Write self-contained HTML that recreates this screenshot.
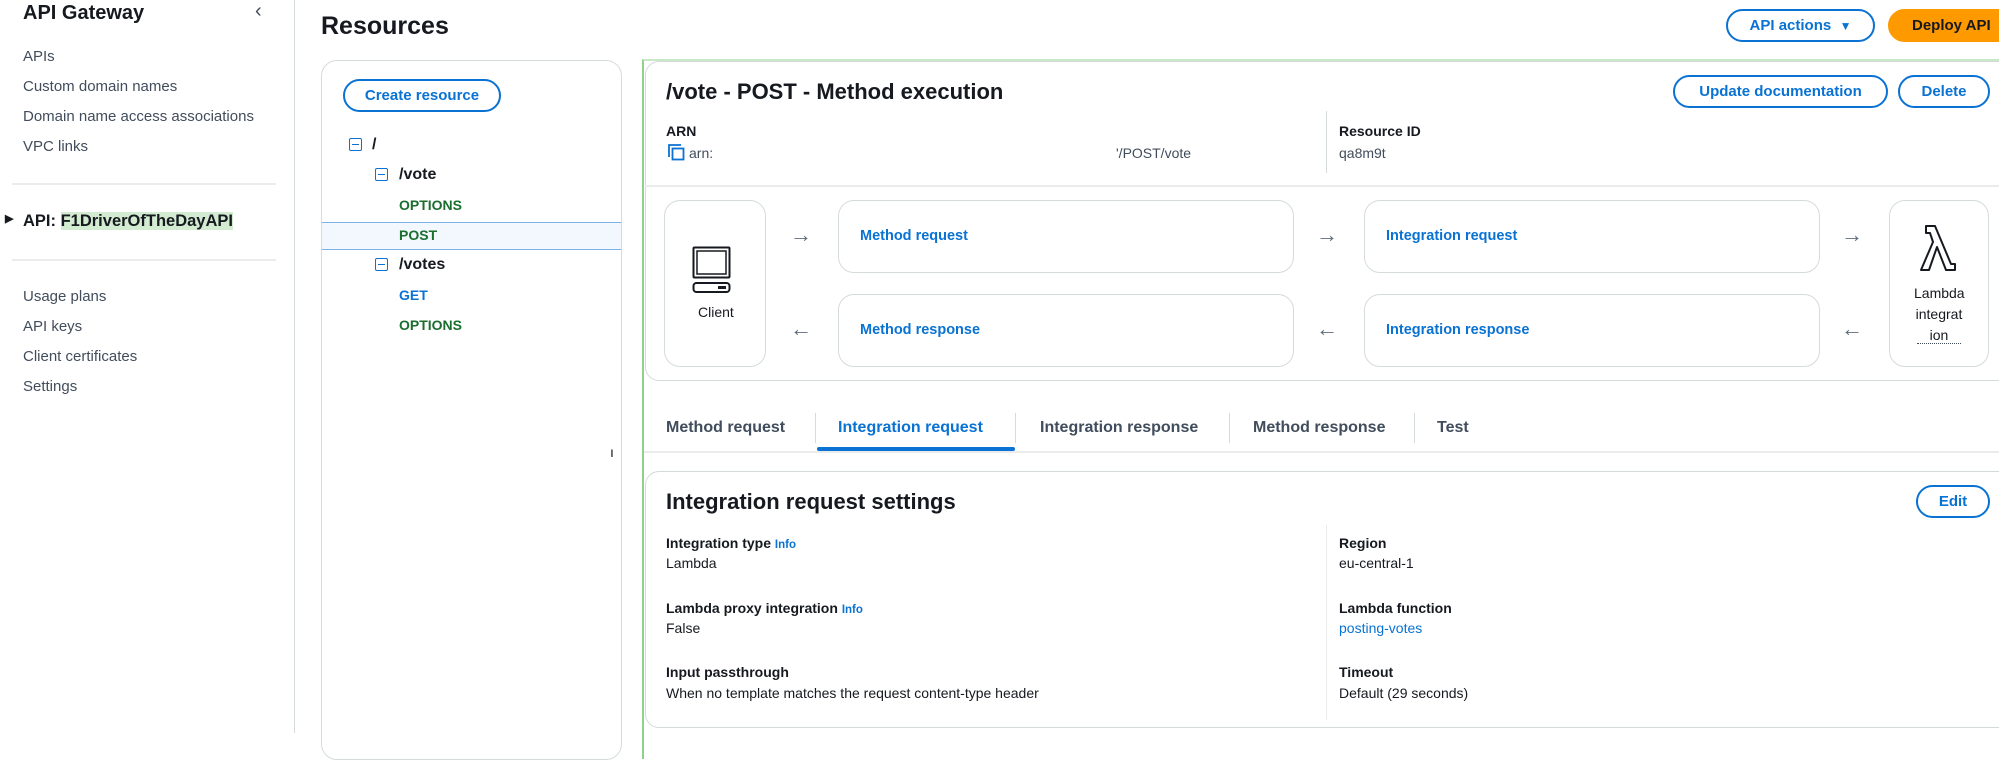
<!DOCTYPE html>
<html><head><meta charset="utf-8"><style>
*{margin:0;padding:0;box-sizing:border-box}
body{width:1999px;height:733px;overflow:hidden;background:#fff;font-family:"Liberation Sans",sans-serif;color:#16191f;position:relative}
.a{position:absolute;white-space:nowrap;line-height:1}
.nav{font-size:15px;color:#414d5c;left:23px}
.b{font-weight:bold}
.blue{color:#0972d3 !important}
.green{color:#1a6e2e}
.btn{position:absolute;border:2px solid #0972d3;border-radius:20px;color:#0972d3;font-weight:bold;font-size:15px;display:flex;align-items:center;justify-content:center;background:#fff}
.box{position:absolute;border:1.5px solid #d5dbdb;border-radius:16px;background:#fff}
.arrow{position:absolute;font-size:22px;color:#5f6b7a;line-height:1}
.lab{font-size:14px;font-weight:bold}
.val{font-size:14px;color:#16191f}
.tree-ic{position:absolute;width:13px;height:13px;border:1.8px solid #0972d3;border-radius:2px}
.tree-ic:after{content:"";position:absolute;left:2px;right:2px;top:4.5px;height:1.8px;background:#0972d3}
</style></head><body>
<!-- sidebar -->
<div style="position:absolute;left:294px;top:0;width:1px;height:733px;background:#d5dbdb"></div>
<div class="a b" style="left:23px;top:3px;font-size:20px">API Gateway</div>
<div class="a" style="left:255px;top:1px;font-size:20px;color:#414d5c">‹</div>
<div class="a nav" style="top:49px">APIs</div>
<div class="a nav" style="top:79px">Custom domain names</div>
<div class="a nav" style="top:109px">Domain name access associations</div>
<div class="a nav" style="top:139px">VPC links</div>
<div style="position:absolute;left:12px;width:264px;top:183px;height:2px;background:#e9ebed"></div>
<div class="a b" style="left:5px;top:214px;font-size:11px">▶</div>
<div class="a b" style="left:23px;top:213px;font-size:16.5px">API: <span style="background:#d3ecd1">F1DriverOfTheDayAPI</span></div>
<div style="position:absolute;left:12px;width:264px;top:259px;height:2px;background:#e9ebed"></div>
<div class="a nav" style="top:289px">Usage plans</div>
<div class="a nav" style="top:319px">API keys</div>
<div class="a nav" style="top:349px">Client certificates</div>
<div class="a nav" style="top:379px">Settings</div>

<div class="a b" style="left:321px;top:14px;font-size:25px">Resources</div>
<div class="btn" style="left:1726px;top:9px;width:149px;height:33px">API actions&nbsp;&nbsp;<span style="font-size:12px">▼</span></div>
<div class="btn" style="left:1888px;top:9px;width:130px;height:33px;background:#ff9900;border-color:#ff9900;color:#16191f;justify-content:flex-start;padding-left:22px">Deploy API</div>

<!-- tree panel -->
<div class="box" style="left:321px;top:60px;width:301px;height:700px"></div>
<div class="btn" style="left:343px;top:79px;width:158px;height:33px">Create resource</div>
<div class="tree-ic" style="left:349px;top:138px"></div><div class="a b" style="left:372px;top:137px;font-size:16px">/</div>
<div class="tree-ic" style="left:375px;top:168px"></div><div class="a b" style="left:399px;top:167px;font-size:16px">/vote</div>
<div class="a b green" style="left:399px;top:198px;font-size:14px">OPTIONS</div>
<div style="position:absolute;left:322px;top:222px;width:299px;height:28px;background:#f2f8fd;border-top:1.5px solid #7db3e8;border-bottom:1.5px solid #7db3e8"></div>
<div class="a b green" style="left:399px;top:228px;font-size:14px">POST</div>
<div class="tree-ic" style="left:375px;top:258px"></div><div class="a b" style="left:399px;top:257px;font-size:16px">/votes</div>
<div class="a b blue" style="left:399px;top:288px;font-size:14px">GET</div>
<div class="a b green" style="left:399px;top:318px;font-size:14px">OPTIONS</div>
<div class="a" style="left:610px;top:445px;font-size:14px">ı</div>

<!-- main -->
<div style="position:absolute;left:642px;top:59px;width:1400px;height:700px;border-left:2px solid #8fd18a;border-top:2px solid #c9e8c6"></div>
<div class="box" style="left:645px;top:61px;width:1400px;height:320px;border-radius:14px"></div>
<div class="a b" style="left:666px;top:81px;font-size:22px">/vote - POST - Method execution</div>
<div class="btn" style="left:1673px;top:75px;width:215px;height:33px">Update documentation</div>
<div class="btn" style="left:1898px;top:75px;width:92px;height:33px">Delete</div>
<div class="a lab" style="left:666px;top:124px">ARN</div>
<svg style="position:absolute;left:668px;top:144px" width="17" height="17" viewBox="0 0 17 17"><path d="M1 13V1h12" fill="none" stroke="#0972d3" stroke-width="1.8"/><rect x="4.5" y="4.5" width="11" height="11" fill="none" stroke="#0972d3" stroke-width="1.8"/></svg>
<div class="a val" style="left:689px;top:146px;color:#414d5c">arn:</div>
<div class="a val" style="left:1116px;top:146px;color:#414d5c">'/POST/vote</div>
<div style="position:absolute;left:1326px;top:111px;width:1px;height:62px;background:#d5dbdb"></div>
<div class="a lab" style="left:1339px;top:124px">Resource ID</div>
<div class="a val" style="left:1339px;top:146px;color:#414d5c">qa8m9t</div>
<div style="position:absolute;left:645px;top:185px;width:1360px;height:1.5px;background:#e9ebed"></div>

<div class="box" style="left:664px;top:200px;width:102px;height:167px"></div>
<svg style="position:absolute;left:692px;top:246px" width="40" height="48" viewBox="0 0 40 48"><rect x="1.5" y="1.5" width="36" height="30" rx="1" fill="none" stroke="#16191f" stroke-width="2"/><rect x="5" y="5" width="29" height="23" fill="none" stroke="#16191f" stroke-width="1.5"/><rect x="1.5" y="37" width="36" height="9" rx="3" fill="none" stroke="#16191f" stroke-width="2"/><rect x="26" y="40" width="8" height="3" fill="#16191f"/></svg>
<div class="a" style="left:698px;top:305px;font-size:14px;color:#16191f">Client</div>

<div class="box" style="left:838px;top:200px;width:456px;height:73px"></div>
<div class="a b blue" style="left:860px;top:229px;font-size:14.5px">Method request</div>
<div class="box" style="left:838px;top:294px;width:456px;height:73px"></div>
<div class="a b blue" style="left:860px;top:323px;font-size:14.5px">Method response</div>
<div class="box" style="left:1364px;top:200px;width:456px;height:73px"></div>
<div class="a b blue" style="left:1386px;top:229px;font-size:14.5px">Integration request</div>
<div class="box" style="left:1364px;top:294px;width:456px;height:73px"></div>
<div class="a b blue" style="left:1386px;top:323px;font-size:14.5px">Integration response</div>
<div class="box" style="left:1889px;top:200px;width:100px;height:167px"></div>
<svg style="position:absolute;left:1920px;top:224px" width="36" height="48" viewBox="0 0 36 48"><path d="M6 2h9l16 38h4v6h-9L17 23 9 46H1l12-28-3-9H6z" fill="none" stroke="#16191f" stroke-width="2" stroke-linejoin="round"/></svg>
<div class="a" style="left:1914px;top:283px;font-size:14px;line-height:21px;text-align:center;width:50px">Lambda<br>integrat<br>ion</div>
<div style="position:absolute;left:1917px;top:343px;width:44px;border-top:1.5px dotted #414d5c"></div>

<div class="arrow" style="left:790px;top:224px">→</div>
<div class="arrow" style="left:790px;top:318px">←</div>
<div class="arrow" style="left:1316px;top:224px">→</div>
<div class="arrow" style="left:1316px;top:318px">←</div>
<div class="arrow" style="left:1841px;top:224px">→</div>
<div class="arrow" style="left:1841px;top:318px">←</div>

<!-- tabs -->
<div class="a b" style="left:666px;top:420px;font-size:16px;color:#414d5c">Method request</div>
<div class="a b blue" style="left:838px;top:420px;font-size:16px">Integration request</div>
<div class="a b" style="left:1040px;top:420px;font-size:16px;color:#414d5c">Integration response</div>
<div class="a b" style="left:1253px;top:420px;font-size:16px;color:#414d5c">Method response</div>
<div class="a b" style="left:1437px;top:420px;font-size:16px;color:#414d5c">Test</div>
<div style="position:absolute;left:815px;top:413px;width:1px;height:30px;background:#d5dbdb"></div>
<div style="position:absolute;left:1015px;top:413px;width:1px;height:30px;background:#d5dbdb"></div>
<div style="position:absolute;left:1229px;top:413px;width:1px;height:30px;background:#d5dbdb"></div>
<div style="position:absolute;left:1414px;top:413px;width:1px;height:30px;background:#d5dbdb"></div>
<div style="position:absolute;left:644px;top:451px;width:1360px;height:1.5px;background:#e9ebed"></div>
<div style="position:absolute;left:817px;top:447px;width:198px;height:4px;border-radius:2px;background:#0972d3"></div>

<!-- settings card -->
<div class="box" style="left:645px;top:471px;width:1400px;height:257px;border-radius:14px"></div>
<div class="a b" style="left:666px;top:491px;font-size:22px">Integration request settings</div>
<div class="btn" style="left:1916px;top:485px;width:74px;height:33px">Edit</div>
<div style="position:absolute;left:1326px;top:525px;width:1px;height:195px;background:#e9ebed"></div>
<div class="a lab" style="left:666px;top:536px">Integration type <span class="blue" style="font-size:11.5px">Info</span></div>
<div class="a val" style="left:666px;top:556px">Lambda</div>
<div class="a lab" style="left:666px;top:601px">Lambda proxy integration <span class="blue" style="font-size:11.5px">Info</span></div>
<div class="a val" style="left:666px;top:621px">False</div>
<div class="a lab" style="left:666px;top:665px">Input passthrough</div>
<div class="a val" style="left:666px;top:686px">When no template matches the request content-type header</div>
<div class="a lab" style="left:1339px;top:536px">Region</div>
<div class="a val" style="left:1339px;top:556px">eu-central-1</div>
<div class="a lab" style="left:1339px;top:601px">Lambda function</div>
<div class="a val blue" style="left:1339px;top:621px">posting-votes</div>
<div class="a lab" style="left:1339px;top:665px">Timeout</div>
<div class="a val" style="left:1339px;top:686px">Default (29 seconds)</div>
</body></html>
